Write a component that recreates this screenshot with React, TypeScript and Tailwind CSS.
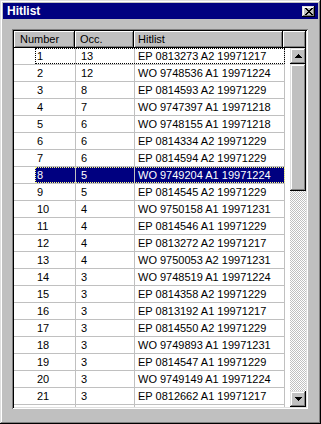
import React from "react";

const rows: [string, string, string][] = [
  ["1", "13", "EP 0813273 A2 19971217"],
  ["2", "12", "WO 9748536 A1 19971224"],
  ["3", "8", "EP 0814593 A2 19971229"],
  ["4", "7", "WO 9747397 A1 19971218"],
  ["5", "6", "WO 9748155 A1 19971218"],
  ["6", "6", "EP 0814334 A2 19971229"],
  ["7", "6", "EP 0814594 A2 19971229"],
  ["8", "5", "WO 9749204 A1 19971224"],
  ["9", "5", "EP 0814545 A2 19971229"],
  ["10", "4", "WO 9750158 A1 19971231"],
  ["11", "4", "EP 0814546 A1 19971229"],
  ["12", "4", "EP 0813272 A2 19971217"],
  ["13", "4", "WO 9750053 A2 19971231"],
  ["14", "3", "WO 9748519 A1 19971224"],
  ["15", "3", "EP 0814358 A2 19971229"],
  ["16", "3", "EP 0813192 A1 19971217"],
  ["17", "3", "EP 0814550 A2 19971229"],
  ["18", "3", "WO 9749893 A1 19971231"],
  ["19", "3", "EP 0814547 A1 19971229"],
  ["20", "3", "WO 9749149 A1 19971224"],
  ["21", "3", "EP 0812662 A1 19971217"],
  ["", "", ""],
];

const btn =
  "bg-[#c0c0c0] shadow-[inset_-1px_-1px_#000,inset_1px_1px_#dfdfdf,inset_-2px_-2px_#808080,inset_2px_2px_#fff]";
const hdr =
  "h-full bg-[#c0c0c0] shadow-[inset_-1px_-1px_#000,inset_1px_1px_#fff,inset_-2px_-2px_#808080] leading-[17px] whitespace-nowrap overflow-hidden";

function UpArrow() {
  return (
    <svg width="7" height="4" viewBox="0 0 7 4" shapeRendering="crispEdges">
      <rect x="3" y="0" width="1" height="1" fill="#000" />
      <rect x="2" y="1" width="3" height="1" fill="#000" />
      <rect x="1" y="2" width="5" height="1" fill="#000" />
      <rect x="0" y="3" width="7" height="1" fill="#000" />
    </svg>
  );
}

function DownArrow() {
  return (
    <svg width="7" height="4" viewBox="0 0 7 4" shapeRendering="crispEdges">
      <rect x="0" y="0" width="7" height="1" fill="#000" />
      <rect x="1" y="1" width="5" height="1" fill="#000" />
      <rect x="2" y="2" width="3" height="1" fill="#000" />
      <rect x="3" y="3" width="1" height="1" fill="#000" />
    </svg>
  );
}

function CloseGlyph() {
  const px = [
    "xx....xx",
    ".xx..xx.",
    "..xxxx..",
    "...xx...",
    "..xxxx..",
    ".xx..xx.",
    "xx....xx",
  ];
  return (
    <svg width="8" height="7" viewBox="0 0 8 7" shapeRendering="crispEdges">
      {px.flatMap((r, y) =>
        r.split("").map((c, x) =>
          c === "x" ? <rect key={`${x}-${y}`} x={x} y={y} width="1" height="1" fill="#000" /> : null
        )
      )}
    </svg>
  );
}

export default function App() {
  return (
    <div
      className="w-[321px] h-[424px] bg-[#c0c0c0] p-[3px] flex flex-col shadow-[inset_-1px_-1px_#000,inset_1px_1px_#dfdfdf,inset_-2px_-2px_#808080,inset_2px_2px_#fff] text-[11px] text-black"
      style={{ fontFamily: '"Liberation Sans", Arial, sans-serif' }}
    >
      {/* Title bar */}
      <div className="h-[16px] bg-[#000080] flex items-center justify-between pl-[4px] pr-[3px]">
        <span className="text-white font-bold text-[12px] leading-[16px]">Hitlist</span>
        <div className={`w-[13px] h-[11px] flex items-center justify-center ${btn}`}>
          <CloseGlyph />
        </div>
      </div>

      {/* List view */}
      <div className="mt-[10px] ml-[9px] w-[296px] h-[380px] p-[2px] bg-white shadow-[inset_1px_1px_#808080,inset_-1px_-1px_#fff,inset_2px_2px_#000,inset_-2px_-2px_#dfdfdf]">
        <div className="w-[292px] h-[376px] flex flex-col overflow-hidden">
          {/* Header */}
          <div className="h-[17px] flex shrink-0">
            <div className={`w-[61px] pl-[6px] ${hdr}`}>Number</div>
            <div className={`w-[59px] pl-[5px] ${hdr}`}>Occ.</div>
            <div className={`w-[149px] pl-[4px] ${hdr}`}>Hitlist</div>
            <div className={`flex-1 ${hdr}`}></div>
          </div>
          {/* Body */}
          <div className="flex flex-1 min-h-0">
            <div className="w-[274px] overflow-hidden flex flex-col">
              {rows.map(([n, o, h], i) => {
                const sel = i === 7;
                const focus = i === 0;
                return (
                  <div key={i} className="w-[271px] h-[17px] shrink-0 flex border-b border-[#c0c0c0]">
                    <div className="w-[21px] shrink-0" />
                    <div
                      className={`flex flex-1 leading-[16px] whitespace-nowrap ${
                        sel
                          ? "bg-[#000080] text-white outline-1 outline-dotted -outline-offset-1 outline-[#ffff80]"
                          : focus
                          ? "outline-1 outline-dotted -outline-offset-1 outline-black"
                          : ""
                      }`}
                    >
                      <div className="w-[41px] pl-[2px] border-r border-[#c0c0c0]">{n}</div>
                      <div className="w-[59px] pl-[5px] border-r border-[#c0c0c0]">{o}</div>
                      <div className="w-[150px] pl-[3px] border-r border-[#c0c0c0]">{h}</div>
                    </div>
                  </div>
                );
              })}
            </div>
            <div className="w-[2px]" />
            {/* Scrollbar */}
            <div className="w-[16px] flex flex-col">
              <div className={`h-[16px] shrink-0 flex items-center justify-center ${btn}`}>
                <UpArrow />
              </div>
              <div className={`h-[127px] shrink-0 ${btn}`} />
              <div className="flex-1 [background:repeating-conic-gradient(#c0c0c0_0_25%,#ffffff_0_50%)_0_0/2px_2px]" />
              <div className={`h-[16px] shrink-0 flex items-center justify-center ${btn}`}>
                <DownArrow />
              </div>
            </div>
          </div>
        </div>
      </div>
    </div>
  );
}
